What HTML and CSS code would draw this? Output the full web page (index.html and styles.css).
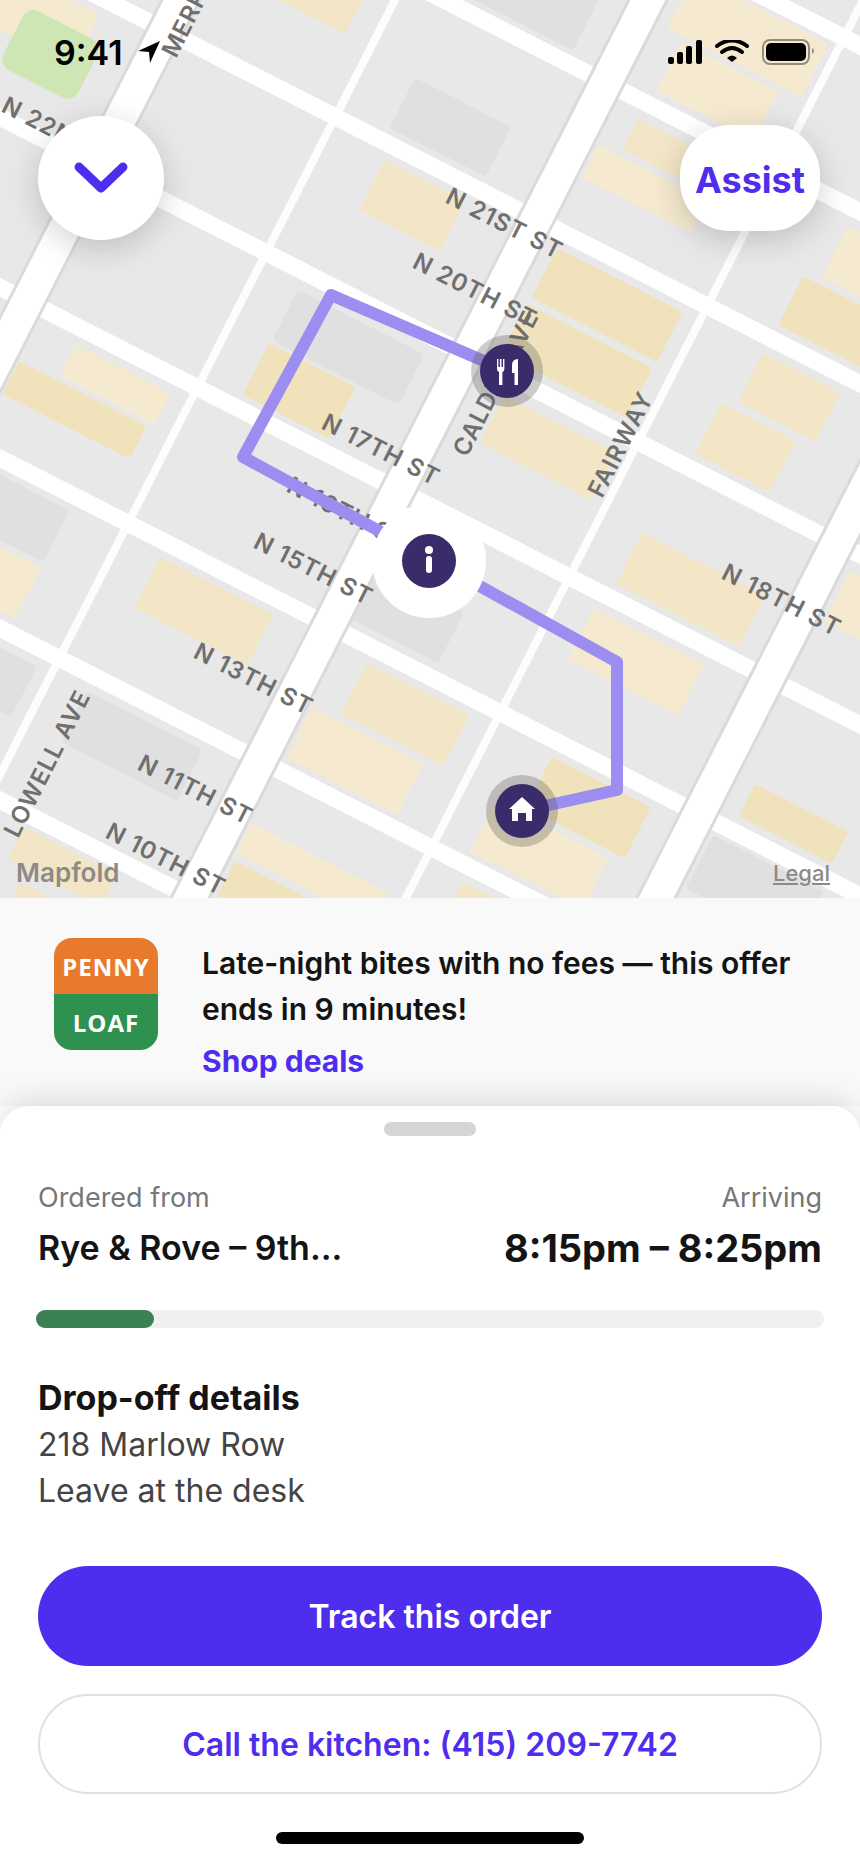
FILE: index.html
```html
<!DOCTYPE html>
<html lang="en">
<head>
  <meta charset="UTF-8" />
  <meta name="viewport" content="width=device-width, initial-scale=1.0" />
  <title>Order status</title>
  <link rel="stylesheet" href="styles.css">
</head>
<body>
  <div class="screen">
    <section class="map">
      <svg class="map-canvas" viewBox="0 0 860 898" preserveAspectRatio="xMidYMid slice" role="img" aria-label="Delivery route">
        <!-- Blocks -->
        <g class="block-grey">
          <rect transform="translate(415 78) rotate(27)" width="108" height="56" rx="3" />
          <rect transform="translate(489 -71) rotate(27)" width="130" height="70" rx="4" />
          <rect transform="translate(298 290) rotate(27)" width="142" height="57" rx="6" />
          <rect transform="translate(-37 456) rotate(27)" width="120" height="58" rx="4" />
          <rect transform="translate(-52 621) rotate(27)" width="100" height="57" rx="4" />
          <rect transform="translate(87 691) rotate(27)" width="130" height="57" rx="4" />
          <rect transform="translate(713 835) rotate(27)" width="125" height="60" rx="4" />
          <rect transform="translate(375 567) rotate(27)" width="100" height="57" rx="4" />
        </g>
        <g class="block-cream">
          <rect transform="translate(-25 -49) rotate(27)" width="140" height="59" rx="3" />
          <rect transform="translate(694 -25) rotate(27)" width="151" height="60" rx="3" />
          <rect transform="translate(681 42) rotate(27)" width="110" height="55" rx="3" />
          <rect transform="translate(598 145) rotate(27)" width="122" height="36" rx="3" />
          <rect transform="translate(848 226) rotate(27)" width="100" height="58" rx="3" />
          <rect transform="translate(850 571) rotate(27)" width="100" height="57" rx="3" />
          <rect transform="translate(76 345) rotate(27)" width="106" height="35" rx="3" />
          <rect transform="translate(-48 522) rotate(27)" width="100" height="57" rx="3" />
          <rect transform="translate(312 707) rotate(27)" width="125" height="57" rx="3" />
          <rect transform="translate(251 823) rotate(27)" width="155" height="34" rx="3" />
          <rect transform="translate(594 608) rotate(27)" width="124" height="58" rx="3" />
          <rect transform="translate(496 801) rotate(27)" width="126" height="57" rx="3" />
        </g>
        <g class="block-tan">
          <rect transform="translate(283 -65) rotate(27)" width="100" height="60" rx="3" />
          <rect transform="translate(638 119) rotate(27)" width="100" height="34" rx="3" />
          <rect transform="translate(385 160) rotate(27)" width="90" height="56" rx="3" />
          <rect transform="translate(504 396) rotate(27)" width="126" height="53" rx="3" />
          <rect transform="translate(763 353) rotate(27)" width="87" height="55" rx="3" />
          <rect transform="translate(721 403) rotate(27)" width="84" height="57" rx="3" />
          <rect transform="translate(642 533) rotate(27)" width="138" height="57" rx="3" />
          <rect transform="translate(160 557) rotate(27)" width="127" height="57" rx="3" />
          <rect transform="translate(367 663) rotate(27)" width="115" height="57" rx="3" />
          <rect transform="translate(24 827) rotate(27)" width="105" height="36" rx="3" />
          <rect transform="translate(19 882) rotate(27)" width="80" height="40" rx="3" />
          <rect transform="translate(463 882) rotate(27)" width="50" height="40" rx="3" />
        </g>
        <g class="block-gold">
          <rect transform="translate(557 248) rotate(27)" width="141" height="56" rx="3" />
          <rect transform="translate(527 304) rotate(27)" width="141" height="56" rx="3" />
          <rect transform="translate(803 276) rotate(27)" width="130" height="55" rx="3" />
          <rect transform="translate(19 361) rotate(27)" width="143" height="37" rx="3" />
          <rect transform="translate(269 343) rotate(27)" width="97" height="58" rx="3" />
          <rect transform="translate(235 861) rotate(27)" width="100" height="40" rx="3" />
          <rect transform="translate(552 757) rotate(27)" width="111" height="57" rx="3" />
          <rect transform="translate(755 784) rotate(27)" width="105" height="36" rx="3" />
        </g>
        <rect class="block-park" transform="translate(28 6) rotate(27)" width="84" height="66" rx="12" />

        <!-- Streets -->
        <g class="road-minor">
          <path d="M446 -100 L-115 1000" />
          <path d="M914 -100 L354 1000" />
        </g>
        <g class="road-street">
          <path d="M-20 -402 L880 56" />
          <path d="M-20 -236 L880 222" />
          <path d="M-20 -64 L880 394" />
          <path d="M-20 107 L880 565" />
          <path d="M-20 277 L880 735" />
          <path d="M-20 448 L880 906" />
          <path d="M-20 618 L880 1076" />
          <path d="M-20 790 L880 1248" />
        </g>
        <g class="road-edge">
          <path d="M232 -100 L-329 1000" />
          <path d="M699 -100 L138 1000" />
          <path d="M1165 -100 L604 1000" />
        </g>
        <g class="road-avenue">
          <path d="M232 -100 L-329 1000" />
          <path d="M699 -100 L138 1000" />
          <path d="M1165 -100 L604 1000" />
        </g>

        <!-- Street names -->
        <g class="street-name">
          <text transform="translate(0 111) rotate(27)">N 22ND ST</text>
          <text transform="translate(444 202) rotate(27)">N 21ST ST</text>
          <text transform="translate(411 267) rotate(27)">N 20TH ST</text>
          <text transform="translate(320 428) rotate(27)">N 17TH ST</text>
          <text transform="translate(285 491) rotate(27)">N 16TH ST</text>
          <text transform="translate(252 547) rotate(27)">N 15TH ST</text>
          <text transform="translate(192 657) rotate(27)">N 13TH ST</text>
          <text transform="translate(136 769) rotate(27)">N 11TH ST</text>
          <text transform="translate(104 837) rotate(27)">N 10TH ST</text>
          <text transform="translate(720 578) rotate(27)">N 18TH ST</text>
          <text transform="translate(176 59) rotate(-63)">MERRITT AVE</text>
          <text transform="translate(467 458) rotate(-63)">CALDER AVE</text>
          <text transform="translate(602 499) rotate(-63)">FAIRWAY</text>
          <text transform="translate(18 839) rotate(-63)">LOWELL AVE</text>
        </g>

        <!-- Route -->
        <path class="route" d="M507 371 L331 295 L243 457 L429 558 L617 662 L617 790 L522 811" />

        <!-- Restaurant -->
        <g transform="translate(507 371)">
          <circle class="pin-halo" r="36" />
          <circle class="pin" r="27" />
          <path class="pin-icon" d="M-10 -12 h1.4 v8 h1.5 v-8 h1.6 v8 h1.5 v-8 h1.4 v9 q0 3.4 -2 4 V14 h-3.400 V1 q-2 -.6 -2 -4 z" />
          <path class="pin-icon" d="M11 -12 V14 H7.500 V2 H5 V-6 Q5 -11.500 11 -12 Z" />
        </g>

        <!-- Courier info -->
        <g transform="translate(429 561)">
          <circle class="pin-plate" r="57" />
          <circle class="pin" r="27" />
          <circle class="pin-icon" cy="-11" r="4" />
          <rect class="pin-icon" x="-3" y="-5" width="6" height="17" rx="3" />
        </g>

        <!-- Home -->
        <g transform="translate(522 811)">
          <circle class="pin-halo" r="36" />
          <circle class="pin" r="27" />
          <path class="pin-icon" d="M0 -14 L13 -2 H10 V10 H4 V2 H-4 V10 H-10 V-2 H-13 Z" />
        </g>
      </svg>

      <div class="map-overlay">
        <div class="status-bar">
          <div class="status-time">
            <span>9:41</span>
            <svg width="22" height="22" viewBox="0 0 22 22" aria-hidden="true"><path d="M22 0 L12 22 L11 11 L0 10 Z" /></svg>
          </div>
          <div class="status-icons">
            <svg width="34" height="24" viewBox="0 0 34 24" aria-hidden="true">
              <rect x="0" y="17" width="6" height="7" rx="2" />
              <rect x="9" y="12" width="6" height="12" rx="2" />
              <rect x="18" y="6" width="6" height="18" rx="2" />
              <rect x="28" y="0" width="6" height="24" rx="2" />
            </svg>
            <svg width="34" height="24" viewBox="0 0 34 24" aria-hidden="true">
              <path class="wifi-arc" d="M2 6 Q17 -5 32 6" />
              <path class="wifi-arc" d="M7 12 Q17 4 27 12" />
              <path d="M12 18 Q17 13 22 18 L17 22 Z" />
            </svg>
            <svg width="52" height="26" viewBox="0 0 52 26" aria-hidden="true">
              <rect class="battery-case" x="1" y="1" width="46" height="24" rx="7" />
              <rect x="4" y="4" width="40" height="18" rx="5" />
              <path class="battery-tip" d="M50 9 Q52 10 52 12 Q52 14 50 15 Z" />
            </svg>
          </div>
        </div>
        <div class="map-actions">
          <button class="round-button" type="button" aria-label="Close">
            <svg width="54" height="32" viewBox="0 0 54 32" aria-hidden="true"><path d="M5 5 L27 26 L49 5" /></svg>
          </button>
          <button class="assist-button" type="button">Assist</button>
        </div>
        <div class="map-credits">
          <span class="map-brand">Mapfold</span>
          <a class="map-legal" href="#">Legal</a>
        </div>
      </div>
    </section>

    <section class="promo">
      <div class="promo-logo">
        <span class="logo-top">PENNY</span>
        <span class="logo-bottom">LOAF</span>
      </div>
      <div class="promo-text">
        <p>Late-night bites with no fees — this offer ends in 9 minutes!</p>
        <a href="#">Shop deals</a>
      </div>
    </section>

    <main class="sheet">
      <div class="handle"></div>
      <div class="summary">
        <div>
          <p class="label">Ordered from</p>
          <h2 class="store">Rye &amp; Rove – 9th...</h2>
        </div>
        <div class="arrival">
          <p class="label">Arriving</p>
          <h2 class="time">8:15pm – 8:25pm</h2>
        </div>
      </div>
      <div class="progress" role="progressbar" aria-label="Order progress" aria-valuenow="15" aria-valuemin="0" aria-valuemax="100">
        <div class="progress-fill" style="width: 15%"></div>
      </div>
      <div class="dropoff">
        <h3>Drop-off details</h3>
        <p>218 Marlow Row</p>
        <p>Leave at the desk</p>
      </div>
      <div class="actions">
        <button class="button button-primary" type="button">Track this order</button>
        <a class="button button-outline" href="tel:+14152097742">Call the kitchen: (415) 209-7742</a>
      </div>
      <div class="home-bar"></div>
    </main>
  </div>
</body>
</html>
```
FILE: styles.css
```css
:root {
  --accent: #4f2dee;
  --pin: #3a2c6b;
  --route: #9b8ef0;
  --text: #141414;
  --muted: #777;
  --green: #3c8055;
}

* {
  margin: 0;
  padding: 0;
  box-sizing: border-box;
}

body {
  font-family: Inter, "Liberation Sans", sans-serif;
  color: var(--text);
  background: #fff;
}

.screen {
  display: flex;
  flex-direction: column;
  min-height: 100vh;
}

/* Map */
.map {
  display: grid;
  background: #e8e8e8;
}

.map-canvas,
.map-overlay {
  grid-area: 1 / 1;
  min-width: 0;
}

.map-canvas {
  display: block;
  width: 100%;
}

.block-grey { fill: #e0e0e0; }
.block-cream { fill: #f5ead0; }
.block-tan { fill: #f3e6c6; }
.block-gold { fill: #f0e3bc; }
.block-park { fill: #cde6b4; }

.road-minor,
.road-street,
.road-edge,
.road-avenue {
  fill: none;
  stroke: #fff;
}

.road-minor { stroke-width: 8; stroke: #fdfdfd; }
.road-street { stroke-width: 17; }
.road-edge { stroke-width: 37; stroke: #dadada; }
.road-avenue { stroke-width: 31; }

.street-name {
  font-size: 24px;
  font-weight: 600;
  letter-spacing: 1px;
  fill: #6f6f6f;
}

.route {
  fill: none;
  stroke: var(--route);
  stroke-width: 12;
  stroke-linejoin: round;
}

.pin { fill: var(--pin); }
.pin-halo { fill: rgba(90, 85, 80, 0.3); }
.pin-plate { fill: #fff; }
.pin-icon { fill: #fff; }

.map-overlay {
  display: flex;
  flex-direction: column;
  z-index: 1;
}

.status-bar {
  display: flex;
  justify-content: space-between;
  align-items: center;
  height: 104px;
  padding: 0 46px 0 54px;
}

.status-time {
  display: flex;
  align-items: center;
  gap: 15px;
  font-size: 34px;
  font-weight: 600;
  color: #000;
}

.status-icons {
  display: flex;
  align-items: center;
  gap: 13px;
}

.wifi-arc {
  fill: none;
  stroke: #000;
  stroke-width: 4;
  stroke-linecap: round;
}

.battery-case {
  fill: none;
  stroke: rgba(0, 0, 0, 0.4);
  stroke-width: 2;
}

.battery-tip { fill: rgba(0, 0, 0, 0.4); }

.map-actions {
  display: flex;
  justify-content: space-between;
  align-items: center;
  padding: 12px 40px 0 38px;
}

.round-button,
.assist-button {
  border: none;
  background: #fff;
  box-shadow: 0 8px 32px rgba(0, 0, 0, 0.18);
  cursor: pointer;
}

.round-button {
  display: flex;
  justify-content: center;
  align-items: center;
  width: 126px;
  height: 124px;
  border-radius: 50%;
}

.round-button path {
  fill: none;
  stroke: var(--accent);
  stroke-width: 9;
  stroke-linecap: round;
  stroke-linejoin: round;
}

.assist-button {
  width: 140px;
  height: 106px;
  padding-top: 4px;
  border-radius: 50px;
  font: 700 36px Inter, sans-serif;
  color: var(--accent);
}

.map-credits {
  display: flex;
  justify-content: space-between;
  align-items: center;
  margin-top: auto;
  padding: 8px 30px 10px 16px;
}

.map-brand {
  font-size: 26px;
  font-weight: 600;
  color: #8f8a88;
}

.map-legal {
  font-size: 22px;
  font-weight: 500;
  color: #8a8a8a;
}

/* Promo */
.promo {
  display: flex;
  gap: 44px;
  padding: 40px 48px 22px 54px;
  background: #f9f9f9;
}

.promo-logo {
  display: flex;
  flex-direction: column;
  flex: none;
  width: 104px;
  height: 112px;
  border-radius: 18px;
  overflow: hidden;
  font: 700 24px "Open Sans", sans-serif;
  letter-spacing: 1px;
  color: #fff;
}

.logo-top,
.logo-bottom {
  display: flex;
  flex: 1;
  justify-content: center;
  align-items: center;
}

.logo-top { background: #e87a2e; }
.logo-bottom { background: #2f9150; }

.promo-text {
  padding-top: 2px;
  font-size: 30px;
  line-height: 46px;
}

.promo-text p {
  font-weight: 600;
  margin-bottom: 6px;
}

.promo-text a {
  font-weight: 700;
  color: var(--accent);
  text-decoration: none;
}

/* Sheet */
.sheet {
  display: flex;
  flex-direction: column;
  flex: 1;
  padding: 16px 38px 20px;
  border-radius: 28px 28px 0 0;
  background: #fff;
  box-shadow: 0 -4px 32px rgba(0, 0, 0, 0.14);
}

.handle {
  align-self: center;
  width: 92px;
  height: 14px;
  border-radius: 7px;
  background: #d5d5d5;
}

.summary {
  display: flex;
  justify-content: space-between;
  margin-top: 44px;
}

.label {
  font-size: 27px;
  line-height: 36px;
  color: var(--muted);
}

.store,
.time {
  line-height: 48px;
  margin-top: 8px;
  white-space: nowrap;
}

.store {
  font-size: 34px;
  font-weight: 600;
}

.time {
  font-size: 38px;
  font-weight: 700;
}

.arrival {
  text-align: right;
}

.progress {
  height: 18px;
  margin: 38px -2px 0;
  border-radius: 9px;
  background: #f0f0f0;
}

.progress-fill {
  height: 100%;
  border-radius: 9px;
  background: var(--green);
}

.dropoff {
  margin-top: 46px;
  font-size: 32px;
  line-height: 46px;
  color: #444;
}

.dropoff h3 {
  font-size: 34px;
  font-weight: 700;
  line-height: 48px;
  color: var(--text);
}

.actions {
  display: flex;
  flex-direction: column;
  gap: 28px;
  margin-top: 52px;
}

.button {
  display: flex;
  justify-content: center;
  align-items: center;
  height: 100px;
  border: none;
  border-radius: 50px;
  font: 600 32px Inter, sans-serif;
  text-decoration: none;
  cursor: pointer;
}

.button-primary {
  background: var(--accent);
  color: #fff;
}

.button-outline {
  border: 2px solid #e0e0e0;
  background: #fff;
  color: var(--accent);
}

.home-bar {
  align-self: center;
  width: 308px;
  height: 12px;
  margin-top: 38px;
  border-radius: 6px;
  background: #000;
}
```
